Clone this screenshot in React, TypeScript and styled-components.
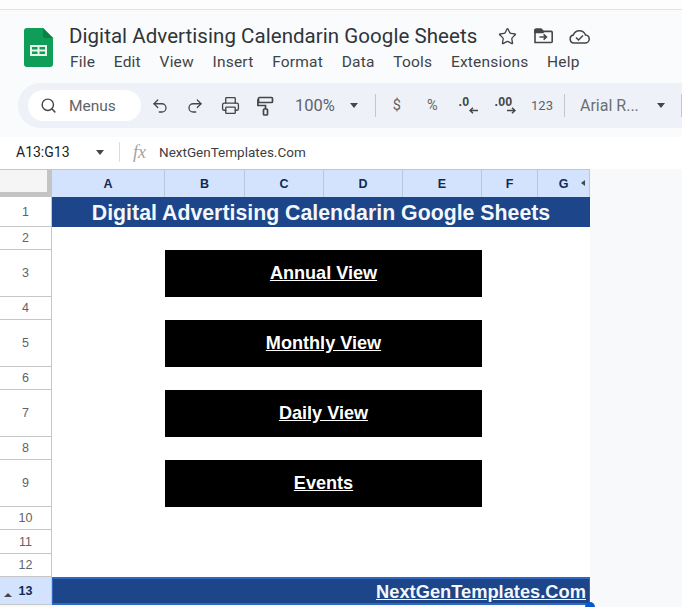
import React from "react";
import styled, { createGlobalStyle } from "styled-components";
import { Search, Undo2, Redo2, Printer, Star } from "lucide-react";

const Global = createGlobalStyle`
  html, body { margin: 0; padding: 0; background: #f8f9fa; }
  body { width: 682px; height: 607px; overflow: hidden; font-family: Roboto, "Liberation Sans", sans-serif; }
`;

const Page = styled.div`
  width: 682px;
  height: 607px;
  display: flex;
  flex-direction: column;
  overflow: hidden;
  background: #f8f9fa;
`;

const TopStrip = styled.div`
  height: 9px;
  flex: none;
  background: #fdfdfd;
  border-bottom: 1px solid #e3e3e3;
`;

const Header = styled.header`
  height: 73px;
  flex: none;
  display: flex;
  background: #f9fbfd;
  padding: 18px 0 0 24px;
  box-sizing: border-box;
  gap: 16px;
`;

const TitleColumn = styled.div`
  display: flex;
  flex-direction: column;
`;

const TitleRow = styled.div`
  display: flex;
  align-items: center;
  height: 16px;
`;

const Title = styled.h1`
  margin: 0;
  font: 400 20.5px/16px Roboto, sans-serif;
  letter-spacing: 0.05px;
  color: #303438;
  white-space: nowrap;
  width: 420px;
`;

const TitleIcon = styled.span`
  display: flex;
  width: 36px;
  justify-content: center;
  color: #444746;
`;

const MenuBar = styled.nav`
  display: flex;
  gap: 18.7px;
  margin-top: 9px;
  margin-left: 1px;
`;

const MenuItem = styled.span`
  font: 400 15.5px/18px Roboto, sans-serif;
  letter-spacing: 0.2px;
  color: #3f4346;
`;

const ToolbarZone = styled.div`
  height: 54px;
  flex: none;
  background: #f9fbfd;
  padding: 0 0 9px 18px;
  box-sizing: border-box;
`;

const Toolbar = styled.div`
  height: 45px;
  display: flex;
  align-items: center;
  background: #eef2f8;
  border-radius: 22px 0 0 22px;
  padding-left: 10px;
  color: #444746;
  white-space: nowrap;
  overflow: hidden;
`;

const SearchPill = styled.div`
  width: 113px;
  height: 31px;
  flex: none;
  display: flex;
  align-items: center;
  box-sizing: border-box;
  padding-left: 12px;
  gap: 12px;
  background: #fff;
  border-radius: 16px;
  margin-right: 1px;
  font: 400 15.5px Roboto, sans-serif;
  color: #5f6368;
`;

const ToolButton = styled.div<{ $w?: number }>`
  width: ${(p) => p.$w ?? 35.5}px;
  height: 30px;
  flex: none;
  display: flex;
  align-items: center;
  justify-content: center;
  font: 400 14.5px Roboto, sans-serif;
  color: #5f6368;
`;

const ZoomText = styled.span`
  font: 400 16.5px Roboto, sans-serif;
  color: #5f6368;
  margin-left: 11px;
  width: 51px;
`;

const FontName = styled.span`
  font: 400 16px Roboto, sans-serif;
  color: #6b6f73;
  margin-left: 15px;
  width: 75px;
`;

const Caret = styled.i<{ $gap?: number }>`
  flex: none;
  width: 0;
  height: 0;
  margin-left: ${(p) => p.$gap ?? 0}px;
  border-left: 4.5px solid transparent;
  border-right: 4.5px solid transparent;
  border-top: 5px solid #444746;
`;

const ToolDivider = styled.i<{ $left: number; $right?: number }>`
  flex: none;
  width: 1px;
  height: 23px;
  background: #c7c7c7;
  margin-left: ${(p) => p.$left}px;
  margin-right: ${(p) => p.$right ?? 0}px;
`;

const StackedNumber = styled.span<{ $w: number }>`
  width: ${(p) => p.$w}px;
  display: flex;
  flex-direction: column;
  align-items: flex-start;
  font: 700 12.5px/10px "Liberation Sans", sans-serif;
  color: #444746;
  letter-spacing: 0.2px;
  & > svg { align-self: flex-end; }
`;

const Count = styled.span`
  font: 400 13px Roboto, sans-serif;
  color: #5f6368;
`;

const FormulaBar = styled.div`
  height: 32px;
  flex: none;
  display: flex;
  align-items: center;
  background: #fff;
  box-sizing: border-box;
  padding: 0 0 2px 16px;
`;

const NameBox = styled.span`
  width: 80px;
  font: 400 14px Roboto, sans-serif;
  color: #202124;
`;

const FormulaDivider = styled.i`
  width: 1px;
  height: 20px;
  background: #dadce0;
  margin-left: 15px;
`;

const Fx = styled.span`
  font: italic 400 18px "Liberation Serif", serif;
  color: #a0a3a6;
  margin-left: 13px;
  width: 26px;
`;

const FormulaText = styled.span`
  font: 400 13.5px Roboto, sans-serif;
  color: #3c4043;
`;

const Sheet = styled.div`
  position: relative;
  flex: none;
  width: 590px;
  display: grid;
  grid-template-columns: 52px 113px 80px 79px 79px 79px 56px 52px;
  grid-template-rows: 27px 30px 23px 47px 23px 47px 23px 47px 23px 47px 23px 24px 23px 28px;
  background: #fff;
  border-top: 1px solid #c4c7c5;
`;

const Corner = styled.div`
  background: #f5f5f5;
  box-sizing: border-box;
  border-right: 5px solid #c4c4c4;
  border-bottom: 5px solid #c4c4c4;
`;

const ColHead = styled.div`
  position: relative;
  background: #d3e3fd;
  box-sizing: border-box;
  border-right: 1px solid #b9c7dc;
  display: flex;
  align-items: center;
  justify-content: center;
  font: 700 12.5px "Liberation Sans", sans-serif;
  color: #0f2a55;
  &:last-of-type { border-right: 0; }
`;

const ColCollapse = styled.i`
  position: absolute;
  right: 4px;
  top: 10px;
  width: 0;
  height: 0;
  border-top: 3.5px solid transparent;
  border-bottom: 3.5px solid transparent;
  border-right: 4px solid #444746;
`;

const RowHead = styled.div<{ $active?: boolean }>`
  grid-column: 1;
  position: relative;
  box-sizing: border-box;
  background: ${(p) => (p.$active ? "#d3e3fd" : "#fff")};
  border-right: 1px solid #c4c7c5;
  border-bottom: 1px solid #c4c7c5;
  display: flex;
  align-items: center;
  justify-content: center;
  font: ${(p) => (p.$active ? 700 : 400)} 12.5px "Liberation Sans", sans-serif;
  color: ${(p) => (p.$active ? "#0f2a55" : "#5f6368")};
`;

const RowCollapse = styled.i`
  position: absolute;
  left: 4px;
  bottom: 7px;
  width: 0;
  height: 0;
  border-left: 4px solid transparent;
  border-right: 4px solid transparent;
  border-bottom: 4px solid #444746;
`;

const Banner = styled.div`
  grid-column: 2 / 9;
  background: #1d4589;
  color: #f4f7fb;
  display: flex;
  align-items: center;
  justify-content: center;
  box-sizing: border-box;
  padding-top: 2px;
  font: 700 21.3px "Liberation Sans", sans-serif;
`;

const Blank = styled.div`
  grid-column: 2 / 9;
  background: #fff;
`;

const LinkRow = styled.div`
  grid-column: 2 / 9;
  display: grid;
  grid-template-columns: 113px 317px 108px;
  background: #fff;
`;

const LinkButton = styled.a`
  grid-column: 2;
  background: #000;
  color: #fff;
  display: flex;
  align-items: center;
  justify-content: center;
  font: 700 18.1px "Liberation Sans", sans-serif;
  text-decoration: underline;
`;

const Footer = styled.div`
  grid-column: 2 / 9;
  background: #1d4589;
  box-sizing: border-box;
  border: 2px solid #3066c4;
  border-width: 2px 1px 2px 1px;
  color: #f4f7fb;
  display: flex;
  align-items: center;
  justify-content: flex-end;
  padding: 2px 3px 0 0;
  font: 700 18.3px "Liberation Sans", sans-serif;
  text-decoration: underline;
`;

const Handle = styled.i`
  position: absolute;
  right: -5px;
  bottom: -7px;
  width: 10px;
  height: 10px;
  border-radius: 50%;
  background: #0b57d0;
`;

const SheetsLogo = () => (
  <svg width="29" height="39" viewBox="0 0 29 39">
    <path d="M3 0H19L29 10V36a3 3 0 0 1-3 3H3a3 3 0 0 1-3-3V3a3 3 0 0 1 3-3z" fill="#0f9d58" />
    <path d="M19 0L29 10H21a2 2 0 0 1-2-2z" fill="#0b8043" />
    <path d="M6 17H23V28H6z M8 19V21.5H13.5V19z M15.5 19V21.5H21V19z M8 23.5V26H13.5V23.5z M15.5 23.5V26H21V23.5z" fill="#e6f4ea" fillRule="evenodd" />
  </svg>
);

const PaintIcon = () => (
  <svg width="18" height="20" viewBox="0 0 18 20" fill="none" stroke="#444746" strokeWidth="1.7">
    <rect x="1.5" y="1.5" width="14" height="5" rx="1" />
    <path d="M1.5 4H0.9V9.5H8.5V13" />
    <rect x="6.5" y="13" width="4" height="6" rx="0.8" />
  </svg>
);

const FolderIcon = () => (
  <svg width="19" height="16" viewBox="0 0 19 16" fill="none" stroke="#444746" strokeWidth="1.6">
    <path d="M1 14.5V2.2A1 1 0 0 1 2 1.2H7L9 3.4H17.2A1 1 0 0 1 18.2 4.4V13.5A1 1 0 0 1 17.2 14.5z" fill="none" />
    <path d="M1 4.5V2.2A1 1 0 0 1 2 1.2H7L9 3.4V4.5z" fill="#444746" />
    <path d="M5.5 9H12M9.6 6.4L12.4 9L9.6 11.6" />
  </svg>
);

const CloudIcon = () => (
  <svg width="21" height="15" viewBox="0 0 21 15" fill="none" stroke="#444746" strokeWidth="1.5">
    <path d="M5 14A4 4 0 0 1 4.3 6.1 6.5 6.5 0 0 1 16.5 6 4 4 0 0 1 16 14z" />
    <path d="M7 8.5L9.5 11L14 6.5" />
  </svg>
);

const Arrow = ({ dir }: { dir: "left" | "right" }) => (
  <svg width="9" height="7" viewBox="0 0 9 7" fill="none" stroke="#444746" strokeWidth="1.5">
    {dir === "left" ? <path d="M9 3.5H1M4 .7L1 3.5L4 6.3" /> : <path d="M0 3.5H8M5 .7L8 3.5L5 6.3" />}
  </svg>
);

const menus = ["File", "Edit", "View", "Insert", "Format", "Data", "Tools", "Extensions", "Help"];
const cols = ["A", "B", "C", "D", "E", "F"];
const links: Record<number, string> = { 3: "Annual View", 5: "Monthly View", 7: "Daily View", 9: "Events" };

export default function App() {
  return (
    <Page>
      <Global />
      <TopStrip />
      <Header>
        <SheetsLogo />
        <TitleColumn>
          <TitleRow>
            <Title>Digital Advertising Calendarin Google Sheets</Title>
            <TitleIcon><Star size={19} strokeWidth={1.7} /></TitleIcon>
            <TitleIcon><FolderIcon /></TitleIcon>
            <TitleIcon><CloudIcon /></TitleIcon>
          </TitleRow>
          <MenuBar>
            {menus.map((m) => <MenuItem key={m}>{m}</MenuItem>)}
          </MenuBar>
        </TitleColumn>
      </Header>
      <ToolbarZone>
        <Toolbar>
          <SearchPill><Search size={17} color="#444746" strokeWidth={2} />Menus</SearchPill>
          <ToolButton><Undo2 size={18} color="#444746" strokeWidth={1.7} /></ToolButton>
          <ToolButton><Redo2 size={18} color="#444746" strokeWidth={1.7} /></ToolButton>
          <ToolButton><Printer size={19} color="#444746" strokeWidth={1.7} /></ToolButton>
          <ToolButton><PaintIcon /></ToolButton>
          <ZoomText>100%</ZoomText>
          <Caret $gap={4} />
          <ToolDivider $left={17} $right={3} />
          <ToolButton>$</ToolButton>
          <ToolButton>%</ToolButton>
          <ToolButton $w={36}><StackedNumber $w={19}>.0<Arrow dir="left" /></StackedNumber></ToolButton>
          <ToolButton $w={38}><StackedNumber $w={21}>.00<Arrow dir="right" /></StackedNumber></ToolButton>
          <ToolButton $w={36}><Count>123</Count></ToolButton>
          <ToolDivider $left={4} />
          <FontName>Arial R...</FontName>
          <Caret $gap={2} />
          <ToolDivider $left={16} />
        </Toolbar>
      </ToolbarZone>
      <FormulaBar>
        <NameBox>A13:G13</NameBox>
        <Caret />
        <FormulaDivider />
        <Fx>fx</Fx>
        <FormulaText>NextGenTemplates.Com</FormulaText>
      </FormulaBar>
      <Sheet>
        <Corner />
        {cols.map((c) => <ColHead key={c}>{c}</ColHead>)}
        <ColHead>G<ColCollapse /></ColHead>
        <RowHead>1</RowHead>
        <Banner>Digital Advertising Calendarin Google Sheets</Banner>
        {[2, 3, 4, 5, 6, 7, 8, 9, 10, 11, 12].map((n) => (
          <React.Fragment key={n}>
            <RowHead>{n}</RowHead>
            {links[n] ? (
              <LinkRow><LinkButton>{links[n]}</LinkButton></LinkRow>
            ) : (
              <Blank />
            )}
          </React.Fragment>
        ))}
        <RowHead $active>13<RowCollapse /></RowHead>
        <Footer>NextGenTemplates.Com<Handle /></Footer>
      </Sheet>
    </Page>
  );
}
